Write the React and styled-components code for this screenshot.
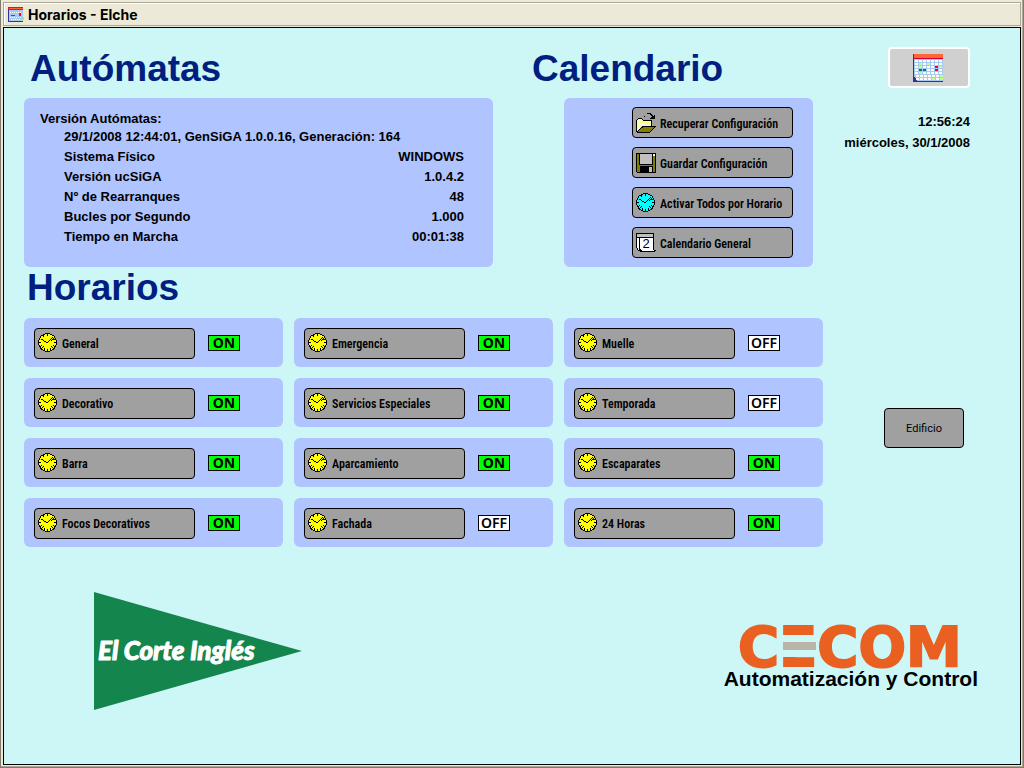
import React from "react";
import styled, { createGlobalStyle } from "styled-components";

const GlobalStyle = createGlobalStyle`
  *, *::before, *::after { box-sizing: border-box; }
  body {
    margin: 0;
    background: #cdf7f7;
    color: #000;
    font-family: "Liberation Sans", Arial, sans-serif;
  }
  h1, h2, p, dl, dd, dt, ul { margin: 0; padding: 0; }
  svg { display: block; flex: none; }
`;

const Frame = styled.div`
  display: flex;
  flex-direction: column;
  min-height: 100vh;
  padding: 0 1px 1px 1px;
  background: #7f7a6c;
`;

const Bevel = styled.div`
  display: flex;
  flex-direction: column;
  flex: 1;
  padding: 2px 1px 1px 2px;
  background: #ece9d8;
  border-right: 1px solid #aca899;
  border-bottom: 1px solid #aca899;
`;

const TitleBar = styled.header`
  display: flex;
  align-items: center;
  gap: 4px;
  height: 24px;
  margin-bottom: 1px;
  padding: 1px 0 0 4px;
  background: #ece9d8;
  border: 1px solid #aca899;
  box-shadow: inset 1px 1px 0 #fff;
`;

const Title = styled.h1`
  font-size: 14px;
  line-height: 20px;
  font-family: Inter, "Liberation Sans", sans-serif;
  font-weight: 700;
`;

const Screen = styled.div`
  flex: 1;
  display: grid;
  grid-template-columns: minmax(0, 1fr) 197px;
  align-content: start;
  padding-left: 20px;
  background: #cdf7f7;
  border: 1px solid #000;
`;

const Main = styled.main`
  min-width: 0;
`;

const TopRow = styled.div`
  display: grid;
  grid-template-columns: 469fr 281fr;
  gap: 39px;
  padding: 20px 10px 0 0;
`;

const Section = styled.section`
  display: flex;
  flex-direction: column;
`;

const Heading = styled.h2`
  padding-left: ${(p) => p.$indent || 0}px;
  color: #001f80;
  font-size: 37px;
  line-height: 42px;
`;

const Panel = styled.div`
  background: #b0c4ff;
  border-radius: 6px;
`;

const InfoPanel = styled(Panel)`
  flex: 1;
  margin-top: 8px;
  padding: 12px 29px 18px 16px;
  font-size: 13px;
  font-weight: 700;
  line-height: 18px;
`;

const Version = styled.p`
  padding: 0 0 1px 24px;
`;

const Details = styled.dl`
  padding-left: 24px;
`;

const Detail = styled.div`
  display: flex;
  justify-content: space-between;
  line-height: 20px;
`;

const ActionsPanel = styled(Panel)`
  display: flex;
  flex-direction: column;
  align-items: flex-end;
  gap: 9px;
  margin: 8px 0 0 32px;
  padding: 9px 20px 9px 0;
`;

const Button = styled.button`
  display: flex;
  align-items: center;
  gap: 4px;
  width: 161px;
  height: ${(p) => p.$height || 31}px;
  padding: 0 3px;
  background: #a0a0a0;
  border: 1px solid #000;
  border-radius: 4px;
  color: #000;
  font: 600 12px/16px "Roboto Condensed", Roboto, sans-serif;
  white-space: nowrap;
`;

const ButtonLabel = styled.span`
  padding-top: 2px;
`;

const PlainButton = styled(Button)`
  justify-content: center;
  width: 80px;
  font: 400 11px/16px Roboto, "Liberation Sans", sans-serif;
`;

const IconButton = styled(Button)`
  justify-content: center;
  width: 82px;
  background: #d0d0d0;
  border: 2px solid #fff;
`;

const Schedules = styled.ul`
  display: grid;
  grid-template-columns: repeat(3, minmax(0, 1fr));
  gap: 11px;
  margin-top: 9px;
  list-style: none;
`;

const Schedule = styled(Panel).attrs({ as: "li" })`
  display: flex;
  align-items: center;
  gap: 13px;
  height: 49px;
  padding: 1px 10px 0;
`;

const State = styled.span`
  width: 32px;
  height: 16px;
  border: 1px solid #000;
  background: ${(p) => (p.$on ? "#00ff00" : "#ffffff")};
  font: 700 14px/14px "Noto Sans", sans-serif;
  font-weight: ${(p) => (p.$on ? 700 : 600)};
  text-align: center;
`;

const Aside = styled.aside`
  display: flex;
  flex-direction: column;
  align-items: flex-end;
  padding: 19px 50px 0 0;
  font-size: 13px;
  font-weight: 700;
  line-height: 21px;
  text-align: right;
`;

const Clock = styled.div`
  margin: 23px 0 255px;
`;

const EdificioSlot = styled.div`
  padding-right: 6px;
`;

const Footer = styled.footer`
  grid-column: 1 / -1;
  display: flex;
  justify-content: space-between;
  align-items: flex-start;
  padding: 45px 42px 52px 70px;
`;

const Maker = styled.div`
  margin-top: 35px;
  font-size: 21px;
  font-weight: 700;
  line-height: 24px;
`;

const LogoSvg = styled.svg`
  overflow: visible;
`;

const CalendarIcon = () => {
  const cells = [];
  const marks = { "1-1": "#c0ff90", "3-1": "#c0ff90", "1-2": "#c0ff90", "5-2": "#f03", "6-2": "#c0ff90", "1-3": "#077", "2-3": "#077", "5-3": "#f03", "1-4": "#c0ff90", "6-5": "#c0ff90", "4-6": "#c0ff90", "6-6": "#c0ff90" };
  for (let r = 0; r < 7; r++)
    for (let c = 0; c < 7; c++)
      cells.push(
        <rect key={`${c}-${r}`} x={2 + c * 4 + (r > 4 ? 1 : 0)} y={6 + r * 3} width="3" height="2" fill={marks[`${c}-${r}`] || "#fff"} />
      );
  return (
    <svg width="32" height="28" viewBox="0 0 32 28" shapeRendering="crispEdges" aria-hidden="true">
      <path d="M0 0h1v27h29v1H0z" fill="#333399" />
      <path d="M1 5h29v17l1 5H3l-2-4z" fill="#a6caf0" />
      <path d="M0 23h2l2 4H0z" fill="#333399" />
      <rect x="1" width="29" height="4" fill="#ff6633" />
      <rect x="1" y="4" width="29" height="1" fill="#cc0033" />
      {cells}
    </svg>
  );
};

const SmallCalendarIcon = () => (
  <svg width="16" height="15" viewBox="0 0 16 15" shapeRendering="crispEdges" aria-hidden="true">
    <rect width="15" height="15" fill="#339" />
    <rect x="1" y="3" width="14" height="11" fill="#a6caf0" />
    <path d="M0 0h15v3H0z" fill="#f03" />
    <path d="M1 1h14v1H1z" fill="#f63" />
    <path d="M2 5h1v1H2zM4 5h1v1H4zM6 5h1v1H6zM8 5h1v1H8zM10 5h1v1h-1zM12 5h1v1h-1zM2 10h1v1H2zM4 10h1v1H4zM6 10h1v1H6zM8 10h1v1H8zM10 10h1v1h-1zM12 10h1v1h-1zM3 12h1v1H3zM5 12h1v1H5zM7 12h1v1H7zM9 12h1v1H9zM11 12h1v1h-1z" fill="#fff" />
    <path d="M3 8h4v1H3z" fill="#077" />
    <rect x="11" y="6" width="2" height="3" fill="#f03" />
    <path d="M5 6h1v1H5zM13 12h2v2h-2zM15 10h1v3h-1z" fill="#8f6" />
  </svg>
);

const ClockIcon = ({ fill }) => (
  <svg width="20" height="20" viewBox="0 0 20 20" shapeRendering="crispEdges" aria-hidden="true">
    <path d="M7 0h5v1h2v1h2v1h1v2h1v2h1v5h-1v2h-1v2h-1v1h-2v1h-2v1H7v-1H5v-1H3v-1H2v-2H1v-2H0V7h1V5h1V3h1V2h2V1h2z" fill="#000" />
    <path d="M7 1h5v1h2v1h2v2h1v2h1v5h-1v2h-1v2h-2v1h-2v1H7v-1H5v-1H3v-2H2v-2H1V7h1V5h1V3h2V2h2z" fill={fill} />
    <path
      d="M9 1h1v2H9zM9 16h1v2H9zM1 9h2v1H1zM16 9h2v1h-2zM5 2h1v2H5zM4 14h1v1H4zM5 13h1v1H5zM3 15h1v1H3zM14 14h1v1h-1zM15 15h1v1h-1zM13 13h1v1h-1zM2 13h1v-1h1v1H3v1H2zM15 12h1v1h1v1h-1v-1h-1zM6 15h1v2H6zM12 15h1v2h-1zM3 6h2v1H3zM5 7h1v1H5zM6 8h2v1H6zM8 9h2v1H8zM10 8h1v1h-1zM11 7h1v1h-1zM12 6h1v1h-1zM13 5h1v1h-1zM14 4h1v1h-1zM15 5h1v1h-1zM14 6h1v1h-1zM13 7h1v1h-1zM15 7h2v-1h-2z"
      fill="#000"
    />
  </svg>
);

const FolderIcon = () => (
  <svg width="20" height="20" viewBox="0 0 20 20" shapeRendering="crispEdges" aria-hidden="true">
    <path d="M8 3h1V2h1V1h1V0h4v1h1v1h1v1h1V2h1v4h-5V5h1V4h1V3h-1V2h-1V1h-4v1h-1v1H9v1H8z" />
    <path d="M0 7h1V6h1V5h4v1h1v1h9v6h4v1h-1v1h-1v1h-1v1h-1v1h-1v1h-1v1H1v-1H0z" />
    <path d="M1 7h1V6h4v1h1v1h8v5H6v1H5v1H4v1H3v1H2v1H1z" fill="#ffff80" />
    <path d="M7 14h11v1h-1v1h-1v1h-1v1h-1v1H2v-1h1v-1h1v-1h1v-1h2z" fill="#808000" />
    <path d="M2 7h1v1H2zM4 7h1v1H4zM3 9h1v1H3zM5 9h1v1H5zM7 9h1v1H7zM9 9h1v1H9zM11 9h1v1h-1zM13 9h1v1h-1zM2 11h1v1H2zM4 11h1v1H4zM6 11h1v1H6zM8 11h1v1H8zM10 11h1v1h-1zM12 11h1v1h-1zM3 13h1v1H3zM2 15h1v1H2z" fill="#fff" />
  </svg>
);

const DiskIcon = () => (
  <svg width="20" height="20" viewBox="0 0 20 20" shapeRendering="crispEdges" aria-hidden="true">
    <path d="M0 0h20v20H1v-1H0z" />
    <path d="M1 1h18v18H1z" fill="#808000" />
    <path d="M3 1h14v11H3z" />
    <path d="M4 1h12v10H4z" fill="#c0c0c0" />
    <path d="M17 1h2v2h-2z" fill="#fff" />
    <path d="M4 13h13v6H4z" />
    <path d="M13 14h3v5h-3z" fill="#c0c0c0" />
  </svg>
);

const PageIcon = () => (
  <svg width="20" height="20" viewBox="0 0 20 20" shapeRendering="crispEdges" aria-hidden="true">
    <path d="M0 0h18v17h2v1h-1v1H4v-1H2v-1H1v-2H0z" />
    <path d="M1 1h16v3H1z" fill="#c0c0c0" />
    <path d="M1 5h2v12H2v-2H1zM4 5h13v12h1v1H6v-1H5v-1H4z" fill="#fff" />
    <text x="10" y="15" fontSize="13" fontWeight="400" fontFamily="Liberation Sans, sans-serif" textAnchor="middle">2</text>
  </svg>
);

const StoreLogo = () => (
  <LogoSvg width="208" height="118" viewBox="0 0 208 118" role="img" aria-label="El Corte Inglés">
    <path d="M0 0L208 59L0 118z" fill="#13854d" />
    <text x="4" y="68" fill="#fff" stroke="#fff" strokeWidth="1" strokeLinejoin="round" fontFamily="Lato, sans-serif" fontSize="26" fontWeight="900" fontStyle="italic">
      El Corte Inglés
    </text>
  </LogoSvg>
);

const MakerLogo = () => (
  <LogoSvg width="254" height="40" viewBox="0 0 254 40" role="img" aria-label="CECOM">
    <text x="14" y="39" fill="#e96020" stroke="#e96020" strokeWidth="2" fontFamily="DejaVu Sans, sans-serif" fontSize="56" fontWeight="700">
      CECOM
    </text>
    <rect x="58" y="8" width="35" height="22" fill="#cdf7f7" />
    <rect x="59" y="15" width="33" height="8" fill="#b8b4a8" />
  </LogoSvg>
);

const details = [
  ["Sistema Físico", "WINDOWS"],
  ["Versión ucSiGA", "1.0.4.2"],
  ["Nº de Rearranques", "48"],
  ["Bucles por Segundo", "1.000"],
  ["Tiempo en Marcha", "00:01:38"],
];

const actions = [
  ["Recuperar Configuración", <FolderIcon />],
  ["Guardar Configuración", <DiskIcon />],
  ["Activar Todos por Horario", <ClockIcon fill="#00ffff" />],
  ["Calendario General", <PageIcon />],
];

const schedules = [
  ["General", true],
  ["Emergencia", true],
  ["Muelle", false],
  ["Decorativo", true],
  ["Servicios Especiales", true],
  ["Temporada", false],
  ["Barra", true],
  ["Aparcamiento", true],
  ["Escaparates", true],
  ["Focos Decorativos", true],
  ["Fachada", false],
  ["24 Horas", true],
];

export default function App() {
  return (
    <>
      <GlobalStyle />
      <Frame>
        <Bevel>
          <TitleBar>
            <SmallCalendarIcon />
            <Title>Horarios - Elche</Title>
          </TitleBar>
          <Screen>
            <Main>
              <TopRow>
                <Section>
                  <Heading $indent={6}>Autómatas</Heading>
                  <InfoPanel>
                    <p>Versión Autómatas:</p>
                    <Version>29/1/2008 12:44:01, GenSiGA 1.0.0.16, Generación: 164</Version>
                    <Details>
                      {details.map(([name, value]) => (
                        <Detail key={name}>
                          <dt>{name}</dt>
                          <dd>{value}</dd>
                        </Detail>
                      ))}
                    </Details>
                  </InfoPanel>
                </Section>
                <Section>
                  <Heading>Calendario</Heading>
                  <ActionsPanel>
                    {actions.map(([label, icon]) => (
                      <Button key={label} type="button">
                        {icon}
                        <ButtonLabel>{label}</ButtonLabel>
                      </Button>
                    ))}
                  </ActionsPanel>
                </Section>
              </TopRow>
              <Heading $indent={3}>Horarios</Heading>
              <Schedules>
                {schedules.map(([label, on]) => (
                  <Schedule key={label}>
                    <Button type="button">
                      <ClockIcon fill="#ffff00" />
                      <ButtonLabel>{label}</ButtonLabel>
                    </Button>
                    <State $on={on}>{on ? "ON" : "OFF"}</State>
                  </Schedule>
                ))}
              </Schedules>
            </Main>
            <Aside>
              <IconButton type="button" $height={41} aria-label="Calendario">
                <CalendarIcon />
              </IconButton>
              <Clock>
                <p>12:56:24</p>
                <p>miércoles, 30/1/2008</p>
              </Clock>
              <EdificioSlot>
                <PlainButton type="button" $height={40}>
                  <ButtonLabel>Edificio</ButtonLabel>
                </PlainButton>
              </EdificioSlot>
            </Aside>
            <Footer>
              <StoreLogo />
              <Maker>
                <MakerLogo />
                <p>Automatización y Control</p>
              </Maker>
            </Footer>
          </Screen>
        </Bevel>
      </Frame>
    </>
  );
}
